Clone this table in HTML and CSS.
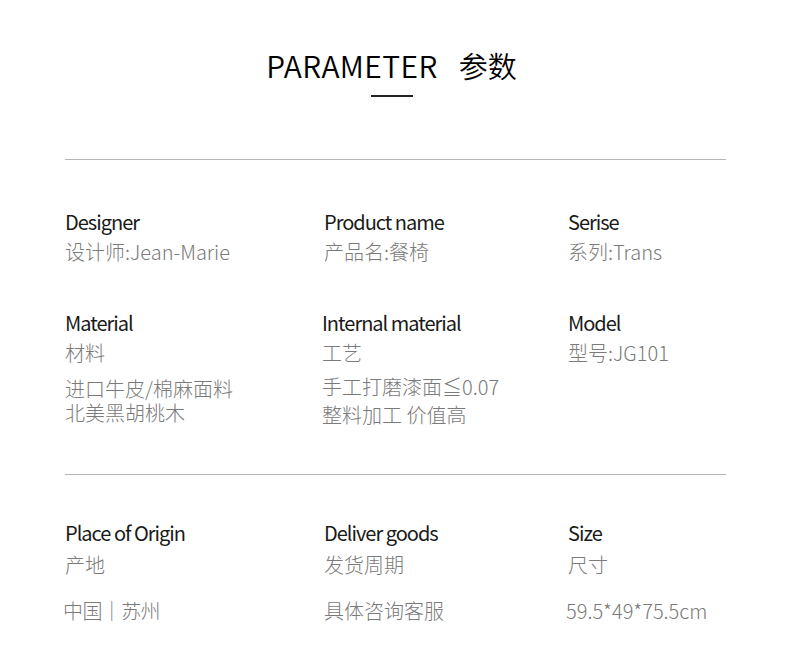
FILE: index.html
```html
<!DOCTYPE html>
<html lang="zh">
<head>
<meta charset="utf-8">
<link rel="stylesheet" href="styles.css">
</head>
<body>
<div class="page">
  <header class="head">
    <h1 class="title"><span class="en">PARAMETER</span><span class="zh">参数</span></h1>
    <div class="bar"></div>
  </header>
  <div class="rule rule-1"></div>
  <section class="grid grid-a">
    <div class="cell">
      <div class="label">Designer</div>
      <div class="value">设计师:Jean-Marie</div>
    </div>
    <div class="cell">
      <div class="label">Product name</div>
      <div class="value">产品名:餐椅</div>
    </div>
    <div class="cell">
      <div class="label">Serise</div>
      <div class="value">系列:Trans</div>
    </div>
  </section>
  <section class="grid grid-b">
    <div class="cell">
      <div class="label">Material</div>
      <div class="value">材料</div>
      <div class="extra">进口牛皮/棉麻面料<br>北美黑胡桃木</div>
    </div>
    <div class="cell shift">
      <div class="label">Internal material</div>
      <div class="value">工艺</div>
      <div class="extra extra-2">手工打磨漆面≦0.07<br>整料加工 价值高</div>
    </div>
    <div class="cell">
      <div class="label">Model</div>
      <div class="value">型号:JG101</div>
    </div>
  </section>
  <div class="rule rule-2"></div>
  <section class="grid grid-c">
    <div class="cell">
      <div class="label">Place of Origin</div>
      <div class="value">产地</div>
      <div class="extra-c nudge tight">中国｜苏州</div>
    </div>
    <div class="cell">
      <div class="label">Deliver goods</div>
      <div class="value">发货周期</div>
      <div class="extra-c">具体咨询客服</div>
    </div>
    <div class="cell">
      <div class="label">Size</div>
      <div class="value">尺寸</div>
      <div class="extra-c nudge">59.5*49*75.5cm</div>
    </div>
  </section>
</div>
</body>
</html>
```

FILE: styles.css
```css
html, body {
  margin: 0;
  padding: 0;
  background: #fff;
}
body {
  font-family: "Noto Sans CJK SC", "Noto Sans", sans-serif;
  color: #1a1a1a;
}
.page {
  width: 790px;
  height: 672px;
  padding: 0 64px 0 65px;
  box-sizing: border-box;
}
.head {
  padding-top: 45px;
  margin-right: 8px;
  display: flex;
  flex-direction: column;
  align-items: center;
}
.title {
  margin: 0;
  font-weight: 350;
  font-size: 30px;
  line-height: 40px;
  display: flex;
  gap: 21px;
  color: #000;
}
.title .en {
  letter-spacing: 0.4px;
}
.title .zh {
  font-size: 29px;
}
.bar {
  margin-top: 10px;
  width: 42px;
  height: 2px;
  background: #222;
}
.rule {
  height: 1px;
  background: #b5b5b5;
}
.rule-1 {
  margin-top: 62px;
}
.grid {
  display: grid;
  grid-template-columns: 259px 244px 1fr;
}
.grid-a {
  margin-top: 47px;
}
.grid-b {
  margin-top: 41px;
}
.label {
  font-size: 20px;
  line-height: 30px;
  letter-spacing: -1px;
  color: #1a1a1a;
}
.value {
  font-size: 20px;
  font-weight: 300;
  line-height: 30px;
  color: #7a7a7a;
}
.shift {
  margin-left: -2px;
}
.extra {
  margin-top: 9px;
  font-size: 20px;
  font-weight: 300;
  line-height: 24px;
  color: #7a7a7a;
}
.extra-2 {
  margin-top: 5px;
  line-height: 28px;
}
.rule-2 {
  margin-top: 45px;
}
.grid-c {
  margin-top: 43px;
}
.grid-c .value {
  margin-top: 2px;
}
.extra-c {
  margin-top: 16px;
  font-size: 20px;
  font-weight: 300;
  line-height: 30px;
  color: #7a7a7a;
}
.nudge {
  margin-left: -2px;
}
.tight {
  letter-spacing: -0.6px;
}
```
